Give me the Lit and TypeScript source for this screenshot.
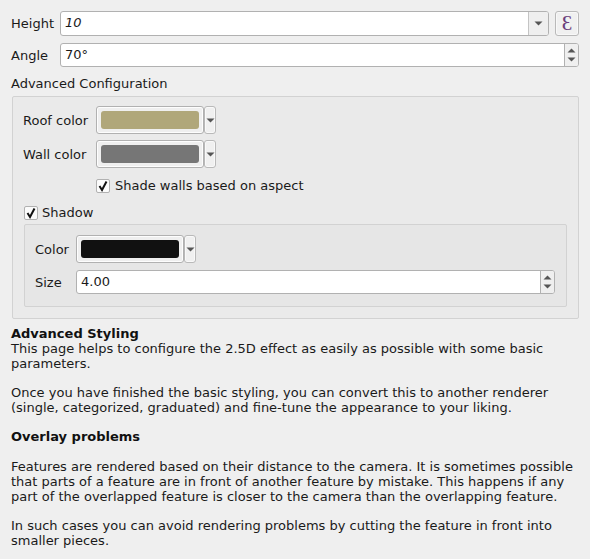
import { LitElement, html, css, svg } from "lit";
import { customElement } from "lit/decorators.js";

const caretDown = svg`<svg class="caret" width="9" height="5" viewBox="0 0 9 5"><path d="M0.5 0.5H8.5L4.5 4.5Z" fill="#555"/></svg>`;
const caretUp = svg`<svg class="caret" width="9" height="5" viewBox="0 0 9 5"><path d="M0.5 4.5H8.5L4.5 0.5Z" fill="#555"/></svg>`;
const check = svg`<svg width="12" height="12" viewBox="0 0 12 12"><path d="M2.5 6L5 10L9.5 1.5" fill="none" stroke="#111" stroke-width="2"/></svg>`;

@customElement("app-root")
export class AppRoot extends LitElement {
  static styles = css`
    :host {
      display: block;
      width: 590px;
      height: 559px;
      overflow: hidden;
      background: #efefef;
      font-family: "DejaVu Sans", sans-serif;
      font-size: 13px;
      line-height: 15px;
      color: #1a1a1a;
      box-sizing: border-box;
      padding: 11px 11px 0 11px;
    }
    * { box-sizing: border-box; }
    .row { display: flex; align-items: center; }
    .lbl { width: 49px; flex: none; }
    .field {
      flex: 1;
      display: flex;
      align-items: stretch;
      height: 25px;
      background: #fff;
      border: 1px solid #b1b1b1;
      border-radius: 3px;
      min-width: 0;
    }
    .field .val { flex: 1; padding: 0 4px; line-height: 22px; }
    .i { font-style: italic; }
    .drop {
      width: 20px;
      border-left: 1px solid #c4c4c4;
      background: #efefef;
      border-radius: 0 2px 2px 0;
      display: flex;
      align-items: center;
      justify-content: center;
    }
    .spin {
      width: 14px;
      border-left: 1px solid #b1b1b1;
      background: #efefef;
      border-radius: 0 2px 2px 0;
      display: flex;
      flex-direction: column;
      align-items: center;
      justify-content: center;
      gap: 4px;
    }
    .eps {
      width: 24px;
      height: 25px;
      margin-left: 6px;
      flex: none;
      border: 1px solid #b9b9b9;
      border-radius: 3px;
      background: #f0f0f0;
      box-shadow: inset 0 0 0 1px #f8f8f8;
      color: #6b3f7c;
      font-size: 21px;
      display: flex;
      align-items: center;
      justify-content: center;
      font-family: "Liberation Serif", serif;
    }
    .angle { margin-top: 7px; height: 24px; }
    .angle .field { height: 24px; }
    .title { margin-top: 9px; height: 15px; }
    .group {
      margin: 5px 0 0 1px;
      width: 567px;
      height: 223px;
      border: 1px solid #d2d2d2;
      border-radius: 2px;
      background: #eaeaea;
      padding: 9px 11px 0 10px;
    }
    .lbl2 { width: 73px; flex: none; }
    .color { display: flex; height: 28px; flex: none; }
    .swatchbtn {
      width: 108px;
      height: 28px;
      border: 1px solid #b1b1b1;
      border-radius: 3px;
      background: #efefef;
      box-shadow: inset 0 0 0 1px #fdfdfd;
      padding: 4px;
    }
    .swatch { height: 100%; border-radius: 3px; }
    .roof { background: #b0a77a; }
    .wall { background: #767676; }
    .black { background: #111111; }
    .colordrop {
      width: 12px;
      height: 28px;
      border: 1px solid #b9b9b9;
      border-radius: 3px;
      background: #f0f0f0;
      box-shadow: inset 0 0 0 1px #f9f9f9;
      display: flex;
      align-items: center;
      justify-content: center;
    }
    .wallrow { margin-top: 6px; }
    .box {
      width: 14px;
      height: 14px;
      flex: none;
      background: #fbfbfb;
      border: 1px solid #b1b1b1;
      border-radius: 2px;
      display: flex;
      align-items: center;
      justify-content: center;
    }
    .shade { margin: 10px 0 0 73px; gap: 5px; height: 15px; }
    .shadow { margin: 12px 0 0 1px; gap: 4px; height: 15px; }
    .inner {
      margin: 4px 0 0 1px;
      width: 543px;
      height: 83px;
      border: 1px solid #d2d2d2;
      border-radius: 2px;
      background: #e6e6e6;
      padding: 10px 11px 0 10px;
    }
    .lbl3 { width: 41px; flex: none; }
    .size { margin-top: 7px; }
    .size .field { height: 24px; }
    .help { margin: 7px 0 0 0; width: 568px; }
    .help p { margin: 0; }
    .help .gap { margin-top: 14px; }
    .help .after { margin-top: 15px; }
    b { font-weight: 700; display: block; color: #111; }
  `;

  private colorBtn(cls: string) {
    return html`<div class="color">
      <div class="swatchbtn"><div class="swatch ${cls}"></div></div>
      <div class="colordrop">${caretDown}</div>
    </div>`;
  }

  private spin() {
    return html`<div class="spin">${caretUp}${caretDown}</div>`;
  }

  render() {
    return html`
      <div class="row">
        <div class="lbl">Height</div>
        <div class="field">
          <div class="val i">10</div>
          <div class="drop">${caretDown}</div>
        </div>
        <div class="eps">Ɛ</div>
      </div>
      <div class="row angle">
        <div class="lbl">Angle</div>
        <div class="field">
          <div class="val">70°</div>
          ${this.spin()}
        </div>
      </div>
      <div class="title">Advanced Configuration</div>
      <div class="group">
        <div class="row">
          <div class="lbl2">Roof color</div>
          ${this.colorBtn("roof")}
        </div>
        <div class="row wallrow">
          <div class="lbl2">Wall color</div>
          ${this.colorBtn("wall")}
        </div>
        <div class="row shade">
          <div class="box">${check}</div>
          <span>Shade walls based on aspect</span>
        </div>
        <div class="row shadow">
          <div class="box">${check}</div>
          <span>Shadow</span>
        </div>
        <div class="inner">
          <div class="row">
            <div class="lbl3">Color</div>
            ${this.colorBtn("black")}
          </div>
          <div class="row size">
            <div class="lbl3">Size</div>
            <div class="field">
              <div class="val">4.00</div>
              ${this.spin()}
            </div>
          </div>
        </div>
      </div>
      <div class="help">
        <b>Advanced Styling</b>
        <p>This page helps to configure the 2.5D effect as easily as possible with some basic<br />parameters.</p>
        <p class="gap">Once you have finished the basic styling, you can convert this to another renderer<br />(single, categorized, graduated) and fine-tune the appearance to your liking.</p>
        <b class="gap">Overlay problems</b>
        <p class="after">Features are rendered based on their distance to the camera. It is sometimes possible<br />that parts of a feature are in front of another feature by mistake. This happens if any<br />part of the overlapped feature is closer to the camera than the overlapping feature.</p>
        <p class="gap">In such cases you can avoid rendering problems by cutting the feature in front into<br />smaller pieces.</p>
      </div>
    `;
  }
}
